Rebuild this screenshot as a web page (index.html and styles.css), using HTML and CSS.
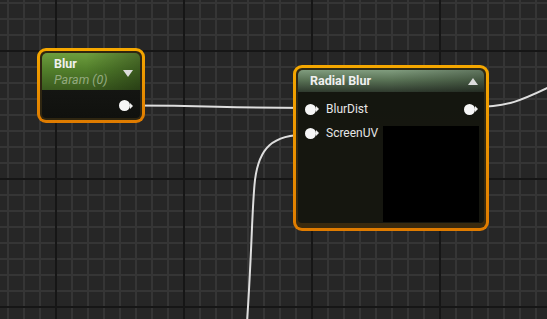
FILE: index.html
```html
<!DOCTYPE html>
<html>
<head>
<meta charset="utf-8">
<title>Material Graph</title>
<link rel="stylesheet" href="styles.css">
</head>
<body>
<div class="graph">
    <svg class="wires" width="547" height="319" viewBox="0 0 547 319">
        <path d="M130 105.5 C220 105.5 215 108 308 108"/>
        <path d="M474 107 C512 107 526 98 560 82"/>
        <path d="M247 322 C252 250 252 205 255 180 C259 148 272 134.5 308 134.5"/>
    </svg>

    <div class="node node-blur">
        <div class="frame">
            <div class="head head-param">
                <div class="titles">
                    <div class="title">Blur</div>
                    <div class="sub">Param (0)</div>
                </div>
                <span class="arrow-down"></span>
            </div>
            <div class="body body-param">
                <span class="pin"><i></i><b></b></span>
            </div>
        </div>
    </div>

    <div class="node node-radial">
        <div class="frame">
            <div class="head head-func">
                <div class="title">Radial Blur</div>
                <span class="arrow-up"></span>
            </div>
            <div class="body body-func">
                <div class="row">
                    <div class="input"><span class="pin"><i></i><b></b></span>BlurDist</div>
                    <span class="pin out"><i></i><b></b></span>
                </div>
                <div class="row row-preview">
                    <div class="input"><span class="pin"><i></i><b></b></span>ScreenUV</div>
                    <div class="preview"></div>
                </div>
            </div>
        </div>
    </div>
</div>
</body>
</html>
```

FILE: styles.css
```css
html,body{margin:0;padding:0;}
body{font-family:Roboto,"Liberation Sans",sans-serif;background:#262626;}

/* canvas with minor (16px) and major (128px) grid lines */
.graph{position:relative;width:547px;height:319px;overflow:hidden;background-color:#262626;
    background-image:
        linear-gradient(to right,#161616 0,#161616 2px,transparent 2px),
        linear-gradient(to bottom,#161616 0,#161616 2px,transparent 2px),
        linear-gradient(to right,#353535 0,#353535 2px,transparent 2px),
        linear-gradient(to bottom,#353535 0,#353535 2px,transparent 2px);
    background-size:128px 128px,128px 128px,16px 16px,16px 16px;
    background-position:55px 0,0 50px,7px 0,0 2px;}

.wires{position:absolute;left:0;top:0;}
.wires path{fill:none;stroke:#dedede;stroke-width:2;}

/* nodes */
.node{position:absolute;box-sizing:border-box;padding:3px;border-radius:9px;background:linear-gradient(#f5a800,#df7b00);}
.node .frame{box-sizing:border-box;height:100%;border-radius:6px;background:#2f2611;padding:2px;display:flex;flex-direction:column;}
.node-blur{left:37px;top:48px;width:108px;height:75px;}
.node-radial{left:293px;top:65px;width:196px;height:166px;}
.node-radial .frame{padding:2px 2px 5px;background:linear-gradient(#2e2814,#3a2a0e);}

.head{display:flex;justify-content:space-between;border-radius:5px 5px 0 0;color:#f0f0f0;}
.title{font-size:12.5px;font-weight:700;}
.head-param{height:37px;box-sizing:border-box;padding:3px 7px 0 12px;
    background:linear-gradient(to right,rgba(0,0,0,0) 45%,rgba(0,0,0,.3)),linear-gradient(#6e9e3e,#527f2b 45%,#3a5a1e);}
.head-param .title{line-height:16px;}
.head-param .sub{font-size:12.5px;line-height:16px;font-style:italic;color:#94aa80;}
.head-func{height:22px;padding:0 6px 0 12px;align-items:center;
    background:linear-gradient(to right,rgba(0,0,0,0) 50%,rgba(0,0,0,.25)),linear-gradient(#809c7e,#5a7356 45%,#2f3a2e);}
.head-func .title{line-height:22px;}

.arrow-down{margin-top:14px;width:0;height:0;border-left:5px solid transparent;border-right:5px solid transparent;border-top:7px solid #dcdcdc;}
.arrow-up{width:0;height:0;border-left:5px solid transparent;border-right:5px solid transparent;border-bottom:7px solid #dcdcdc;}

.body{flex:1;border-radius:0 0 4px 4px;}
.body-param{display:flex;justify-content:flex-end;align-items:flex-start;padding:10px 7px 0 0;background:linear-gradient(#141512,#10110e);}
.body-func{padding:10px 5px 1px 7px;background:rgba(18,20,16,.9);}

.row{display:flex;justify-content:space-between;align-items:center;height:14px;}
.row-preview{margin-top:10px;height:auto;align-items:flex-start;}
.input{display:flex;align-items:center;height:14px;font-size:12px;color:#e6e6e6;}
.input .pin{margin-right:7px;}
.pin{display:flex;align-items:center;}
.pin i{display:block;width:11px;height:11px;border-radius:50%;background:#f6f6f6;}
.pin b{display:block;width:0;height:0;border-left:3px solid #f0f0f0;border-top:3px solid transparent;border-bottom:3px solid transparent;}
.pin.out{margin-right:1px;}
.preview{width:96px;height:96px;background:#000;}
```
